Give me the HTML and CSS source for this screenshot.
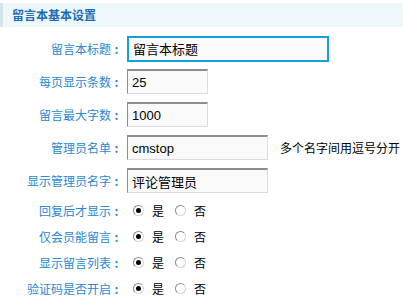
FILE: index.html
```html
<!DOCTYPE html>
<html lang="zh-CN">
<head>
    <meta charset="UTF-8">
    <title>留言本基本设置</title>
    <link rel="stylesheet" href="styles.css">
</head>
<body>
    <div class="panel">
        <div class="head">留言本基本设置</div>
        <div class="form">
            <div class="row">
                <label class="label">留言本标题<span class="colon">:</span></label>
                <input class="text focus w-lg" type="text" value="留言本标题">
            </div>
            <div class="row">
                <label class="label">每页显示条数<span class="colon">:</span></label>
                <input class="text w-sm" type="text" value="25">
            </div>
            <div class="row">
                <label class="label">留言最大字数<span class="colon">:</span></label>
                <input class="text w-sm" type="text" value="1000">
            </div>
            <div class="row">
                <label class="label">管理员名单<span class="colon">:</span></label>
                <input class="text w-md" type="text" value="cmstop">
                <span class="tip">多个名字间用逗号分开</span>
            </div>
            <div class="row">
                <label class="label">显示管理员名字<span class="colon">:</span></label>
                <input class="text w-md" type="text" value="评论管理员">
            </div>
            <div class="row radio-row">
                <label class="label">回复后才显示<span class="colon">:</span></label>
                <input class="radio" type="radio" name="reply" checked><span class="opt">是</span>
                <input class="radio" type="radio" name="reply"><span class="opt">否</span>
            </div>
            <div class="row radio-row">
                <label class="label">仅会员能留言<span class="colon">:</span></label>
                <input class="radio" type="radio" name="member" checked><span class="opt">是</span>
                <input class="radio" type="radio" name="member"><span class="opt">否</span>
            </div>
            <div class="row radio-row">
                <label class="label">显示留言列表<span class="colon">:</span></label>
                <input class="radio" type="radio" name="list" checked><span class="opt">是</span>
                <input class="radio" type="radio" name="list"><span class="opt">否</span>
            </div>
            <div class="row radio-row">
                <label class="label">验证码是否开启<span class="colon">:</span></label>
                <input class="radio" type="radio" name="captcha" checked><span class="opt">是</span>
                <input class="radio" type="radio" name="captcha"><span class="opt">否</span>
            </div>
        </div>
    </div>
</body>
</html>
```

FILE: styles.css
```css
body {
    margin: 0;
    font-family: "Noto Sans CJK SC", "Liberation Sans", sans-serif;
    font-size: 12px;
    color: #000;
    background: #fff;
}
.panel {
    padding-top: 3px;
}
.head {
    height: 24px;
    line-height: 24px;
    padding-left: 9px;
    border-left: 3px solid #d2e5ed;
    background-color: #eef7fa;
    color: #1b6cb6;
    font-weight: bold;
}
.form {
    padding-top: 5px;
}
.row {
    display: flex;
    align-items: center;
    height: 33px;
}
.radio-row {
    height: 26px;
}
.label {
    width: 122px;
    flex: none;
    text-align: right;
    color: #2a87d0;
    margin-right: 5px;
    white-space: nowrap;
}
.colon {
    display: inline-block;
    width: 11px;
    text-align: center;
    font-weight: bold;
}
.text {
    box-sizing: border-box;
    height: 25px;
    margin: 0;
    padding: 0 4px;
    border: 1px solid #dcdcdc;
    border-top: 2px solid #8e8e8e;
    border-left: 1px solid #8e8e8e;
    background-color: #fafafa;
    font-family: "Liberation Sans", "Noto Sans CJK SC", sans-serif;
    font-size: 13px;
    color: #000;
    outline: none;
}
.focus {
    height: 26px;
    border: 2px solid #12a0db;
}
.w-lg {
    width: 202px;
}
.w-md {
    width: 141px;
}
.w-sm {
    width: 81px;
}
.tip {
    margin-left: 12px;
    white-space: nowrap;
}
.radio {
    appearance: none;
    box-sizing: border-box;
    width: 11px;
    height: 11px;
    margin: 0 0 0 6px;
    border: 1px solid #8a8a8a;
    border-right-color: #d4d4d4;
    border-bottom-color: #d4d4d4;
    border-radius: 50%;
    background: #fff;
    position: relative;
}
.radio:checked::after {
    content: "";
    position: absolute;
    left: 2px;
    top: 2px;
    width: 5px;
    height: 5px;
    border-radius: 50%;
    background: #000;
}
.opt {
    margin-left: 8px;
    margin-right: 5px;
}
```
